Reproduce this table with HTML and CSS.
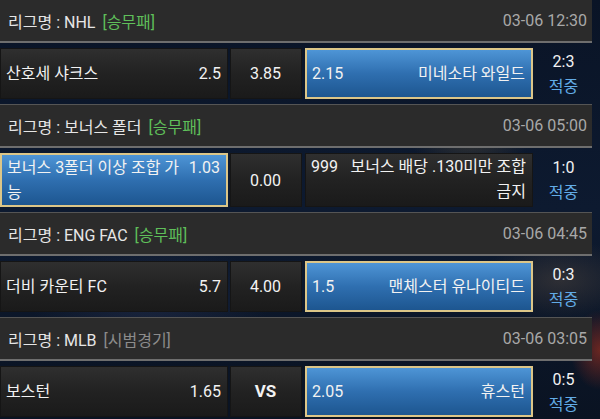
FILE: index.html
```html
<!DOCTYPE html>
<html lang="ko">
<head>
<meta charset="utf-8">
<link rel="stylesheet" href="styles.css">
</head>
<body>
<div class="list">
  <section class="league">
    <div class="lg-head"><div class="lg-name">리그명 : NHL <span class="tag win">[승무패]</span></div><div class="lg-date">03-06 12:30</div></div>
    <div class="match">
      <div class="cell home"><span class="team">산호세 샤크스</span><span class="odd">2.5</span></div>
      <div class="cell draw">3.85</div>
      <div class="cell away sel"><span class="odd">2.15</span><span class="team">미네소타 와일드</span></div>
      <div class="score"><span>2:3</span><span class="hit">적중</span></div>
    </div>
  </section>
  <section class="league">
    <div class="lg-head"><div class="lg-name">리그명 : 보너스 폴더 <span class="tag win">[승무패]</span></div><div class="lg-date">03-06 05:00</div></div>
    <div class="match">
      <div class="cell home sel multi"><span class="team">보너스 3폴더 이상 조합 가능</span><span class="odd">1.03</span></div>
      <div class="cell draw">0.00</div>
      <div class="cell away multi"><span class="odd">999</span><span class="team">보너스 배당 .130미만 조합 금지</span></div>
      <div class="score"><span>1:0</span><span class="hit">적중</span></div>
    </div>
  </section>
  <section class="league">
    <div class="lg-head"><div class="lg-name">리그명 : ENG FAC <span class="tag win">[승무패]</span></div><div class="lg-date">03-06 04:45</div></div>
    <div class="match">
      <div class="cell home"><span class="team">더비 카운티 FC</span><span class="odd">5.7</span></div>
      <div class="cell draw">4.00</div>
      <div class="cell away sel"><span class="odd">1.5</span><span class="team">맨체스터 유나이티드</span></div>
      <div class="score"><span>0:3</span><span class="hit">적중</span></div>
    </div>
  </section>
  <section class="league">
    <div class="lg-head"><div class="lg-name">리그명 : MLB <span class="tag test">[시범경기]</span></div><div class="lg-date">03-06 03:05</div></div>
    <div class="match">
      <div class="cell home"><span class="team">보스턴</span><span class="odd">1.65</span></div>
      <div class="cell draw vs">VS</div>
      <div class="cell away sel"><span class="odd">2.05</span><span class="team">휴스턴</span></div>
      <div class="score"><span>0:5</span><span class="hit">적중</span></div>
    </div>
  </section>
</div>
</body>
</html>
```

FILE: styles.css
```css
html, body {
  margin: 0;
  padding: 0;
}
body {
  width: 600px;
  height: 419px;
  overflow: hidden;
  font-family: "Roboto", "Noto Sans CJK KR", sans-serif;
  color: #f2f2f2;
  background:
    radial-gradient(ellipse 60px 30px at 470px 140px, rgba(120,100,60,0.35), transparent),
    radial-gradient(ellipse 80px 40px at 560px 280px, rgba(110,90,70,0.35), transparent),
    radial-gradient(ellipse 30px 40px at 600px 350px, rgba(170,50,30,0.6), transparent),
    radial-gradient(ellipse 120px 60px at 150px 300px, rgba(60,70,110,0.3), transparent),
    linear-gradient(180deg, #0a1426 0%, #0d1a30 50%, #0a1322 100%);
}
.list {
  width: 592px;
  margin-top: -1px;
}
.lg-head {
  height: 41px;
  background: #2b2b2b;
  border-top: 1px solid #555;
  border-bottom: 2px solid #6e6e6e;
  display: flex;
  align-items: center;
  justify-content: space-between;
  padding: 0 5px 0 8px;
  font-size: 16px;
}
.lg-name {
  color: #e6e6e6;
}
.tag {
  margin-left: 3px;
}
.tag.win {
  color: #5fbf5a;
}
.tag.test {
  color: #8c8c8c;
}
.lg-date {
  color: #a8a8a8;
}
.match {
  display: flex;
  gap: 2px;
  padding: 5px 0 5px;
  align-items: stretch;
}
.cell {
  box-sizing: border-box;
  min-height: 51px;
  display: flex;
  align-items: center;
  justify-content: space-between;
  padding: 0 6px 0 5px;
  font-size: 16px;
  line-height: 25px;
  background: linear-gradient(180deg, #2f2f2f 0%, #222 50%, #1a1a1a 100%);
  border: 1px solid #151515;
  gap: 8px;
}
.home {
  width: 228px;
}
.draw {
  width: 72px;
  justify-content: center;
}
.draw.vs {
  font-weight: bold;
  font-size: 17px;
}
.away {
  width: 228px;
  margin-left: 1px;
}
.cell.sel {
  background: linear-gradient(180deg, #4e95d6 0%, #2f6fb0 50%, #1d5690 100%);
  border: 2px solid #dcc688;
}
.team {
  word-break: break-all;
}
.away .team {
  text-align: right;
}
.multi {
  align-items: flex-start;
}
.score {
  flex: 1;
  display: flex;
  flex-direction: column;
  align-items: center;
  justify-content: center;
  font-size: 16px;
  line-height: 25px;
}
.hit {
  color: #62abe6;
}
```
